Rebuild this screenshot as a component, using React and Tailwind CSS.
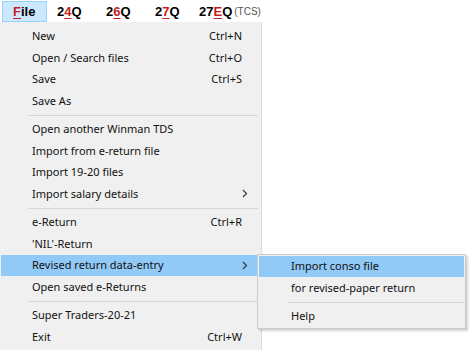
import React from 'react'

const ui = { fontFamily: '"Noto Sans", "Open Sans", sans-serif' }
const bar = { fontFamily: '"Liberation Sans", Arial, sans-serif' }

const mainItems = [
  { label: 'New', key: 'Ctrl+N' },
  { label: 'Open / Search files', key: 'Ctrl+O' },
  { label: 'Save', key: 'Ctrl+S' },
  { label: 'Save As' },
  { sep: true },
  { label: 'Open another Winman TDS' },
  { label: 'Import from e-return file' },
  { label: 'Import 19-20 files' },
  { label: 'Import salary details', sub: true },
  { sep: true },
  { label: 'e-Return', key: 'Ctrl+R' },
  { label: "'NIL'-Return" },
  { label: 'Revised return data-entry', sub: true, active: true },
  { label: 'Open saved e-Returns' },
  { sep: true },
  { label: 'Super Traders-20-21' },
  { label: 'Exit', key: 'Ctrl+W' },
]

function Chevron() {
  return (
    <svg width="6" height="9" viewBox="0 0 6 9" className="block">
      <polyline points="1,1 4.5,4.5 1,8" fill="none" stroke="#333" strokeWidth="1.1" />
    </svg>
  )
}

function Hot({ children }) {
  return <span className="underline text-[#c81d1d] underline-offset-2">{children}</span>
}

function SubMenu() {
  return (
    <div className="absolute left-[-1px] top-[-1px] w-[209px] bg-[#f0f0f0] border border-[#cccccc] p-[1px] shadow-[2px_2px_2px_rgba(0,0,0,0.18)] z-10">
      <div className="h-[21.5px] flex items-center bg-[#91c9f7] pl-[32px] text-[11px] text-[#111]">Import conso file</div>
      <div className="h-[21.5px] flex items-center pl-[32px] text-[11px] text-[#111]">for revised-paper return</div>
      <div className="h-[7px] flex items-center pl-[29px]">
        <div className="h-px w-full bg-[#d7d7d7]" />
      </div>
      <div className="h-[21.5px] flex items-center pl-[32px] text-[11px] text-[#111]">Help</div>
    </div>
  )
}

export default function App() {
  return (
    <div className="w-[472px] h-[360px] bg-white overflow-hidden" style={ui}>
      {/* Menu bar */}
      <div className="h-[22px] flex items-stretch pt-[1px] text-[13px] font-bold text-black" style={bar}>
        <div className="ml-[2px] w-[45px] pl-[10px] flex items-center bg-[#cce8ff] border border-[#99d1ff]">
          <Hot>F</Hot>ile
        </div>
        <div className="w-[49px] pl-[10px] flex items-center">
          2<Hot>4</Hot>Q
        </div>
        <div className="w-[49px] pl-[10px] flex items-center">
          2<Hot>6</Hot>Q
        </div>
        <div className="w-[44px] pl-[10px] flex items-center">
          2<Hot>7</Hot>Q
        </div>
        <div className="pl-[10px] flex items-center">
          27<Hot>E</Hot>Q
          <span className="ml-[2px] text-[10px] font-normal text-[#555]">(TCS)</span>
        </div>
      </div>

      {/* File menu */}
      <div className="w-[262px] h-[328px] bg-[#f0f0f0] border-r border-[#dcdcdc] pt-[3.5px] pb-[3px] pl-[1px] pr-[3px]">
        {mainItems.map((it, i) =>
          it.sep ? (
            <div key={i} className="h-[7px] flex items-center pl-[27px]">
              <div className="h-px w-full bg-[#d7d7d7]" />
            </div>
          ) : (
            <div
              key={i}
              className={`relative h-[21.5px] flex items-center pl-[31px] pr-[16px] text-[11px] text-[#111] ${
                it.active ? 'bg-[#91c9f7]' : ''
              }`}
            >
              <span className="flex-1">{it.label}</span>
              {it.key && <span>{it.key}</span>}
              {it.sub && (
                <span className="absolute right-[10px] top-[6px]">
                  <Chevron />
                </span>
              )}
              {it.active && (
                <div className="absolute left-full top-0">
                  <SubMenu />
                </div>
              )}
            </div>
          )
        )}
      </div>
    </div>
  )
}
